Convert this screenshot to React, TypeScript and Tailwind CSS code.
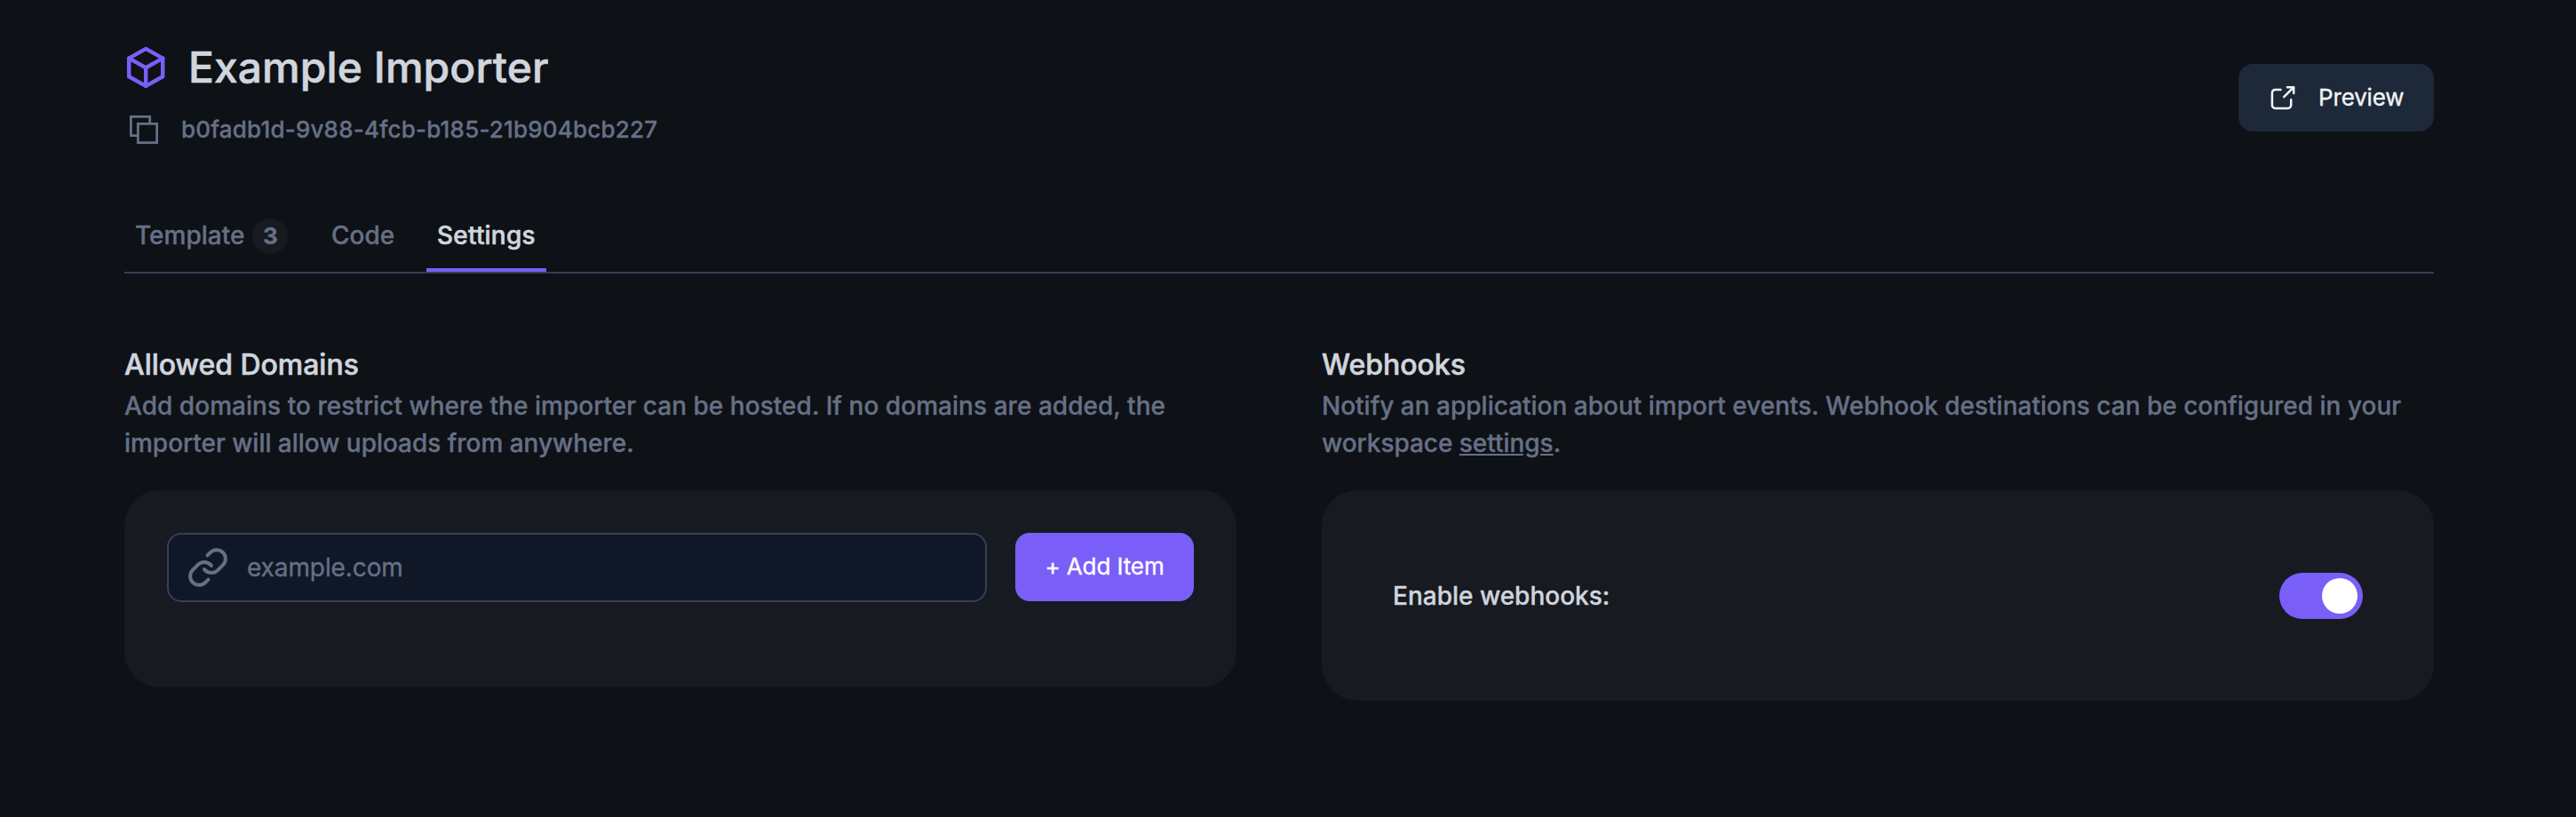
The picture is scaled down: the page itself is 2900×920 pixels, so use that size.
function CubeIcon() {
  return (
    <svg className="size-[52px] text-[#7a5ef8]" viewBox="0 0 52 52" fill="none" stroke="currentColor" strokeWidth="4.5" strokeLinecap="round" strokeLinejoin="round">
      <path d="M24.2 4.9 43.2 15.6V36.2L24.2 46.9 5.2 36.2V15.6z" />
      <path d="M5.2 15.6 24.2 26.2 43.2 15.6M24.2 26.2V46.9" />
    </svg>
  );
}

function CopyIcon() {
  return (
    <svg className="h-8 w-8" viewBox="0 0 32 32" fill="none" stroke="currentColor" strokeWidth="2.8">
      <path d="M8 22.67H1.33V1.33H22.67V8" />
      <path d="M9.33 9.33h21.34v21.34H9.33z" />
    </svg>
  );
}

function LinkIcon() {
  return (
    <svg className="size-12 shrink-0" viewBox="0 0 24 24" fill="none" stroke="currentColor" strokeWidth="2" strokeLinecap="round" strokeLinejoin="round">
      <path d="M10 13a5 5 0 0 0 7.54.54l3-3a5 5 0 0 0-7.07-7.07l-1.72 1.71" />
      <path d="M14 11a5 5 0 0 0-7.54-.54l-3 3a5 5 0 0 0 7.07 7.07l1.71-1.71" />
    </svg>
  );
}

function ExternalIcon() {
  return (
    <svg className="h-7 w-7" viewBox="0 0 28 28" fill="none" stroke="currentColor" strokeWidth="2.5" strokeLinecap="round" strokeLinejoin="round">
      <path d="M11.5 4.9H5.4A3.5 3.5 0 0 0 1.9 8.4V22.4A3.5 3.5 0 0 0 5.4 25.9H19.7A3.5 3.5 0 0 0 23.2 22.4V16.3" />
      <path d="M19 2.2H26.2V9M26.2 2.2 15.2 13.2" />
    </svg>
  );
}

export default function App() {
  return (
    <div className="h-[920px] w-full bg-[#0e1116] pr-[160px] pl-[140px] font-['Inter',sans-serif] text-[28px] font-medium text-[#667085] [-webkit-text-stroke:0.35px]">
      <header className="flex h-[220px] justify-between">
        <div className="pt-[50px]">
          <div className="flex h-[52px] items-center gap-5">
            <CubeIcon />
            <h1 className="text-[48px] leading-[50px] tracking-[0.06px] text-[#d0d5dd] [-webkit-text-stroke:0.6px]">Example Importer</h1>
          </div>
          <div className="mt-7 flex h-8 items-center gap-[26px] pl-[6px]">
            <CopyIcon />
            <span className="text-[26px] leading-8 tracking-[0.19px]">b0fadb1d-9v88-4fcb-b185-21b904bcb227</span>
          </div>
        </div>
        <button className="mt-[72px] flex h-[76px] w-[220px] items-center gap-[26px] rounded-2xl bg-[#1d2939] pl-9 text-[26px] font-normal tracking-[-0.15px] text-[#f2f4f7]">
          <ExternalIcon />
          <span className="pb-[2px]">Preview</span>
        </button>
      </header>
      <nav className="flex h-[88px] border-b-2 border-[#344054] leading-[34px]">
        <div className="flex w-[220px] pt-7 pl-3">
          Template
          <span className="-mt-[2px] ml-[9px] flex size-10 items-center justify-center rounded-full bg-[#171a21] text-[26px] font-bold">3</span>
        </div>
        <div className="w-[120px] pt-7 pl-[13px]">Code</div>
        <div className="w-[135px] border-b-4 border-[#7a5ef8] pt-7 pl-3 tracking-[0.2px] text-[#d0d5dd] [-webkit-text-stroke:0.6px]">Settings</div>
      </nav>
      <main className="grid grid-cols-2 gap-24 pt-[82px]">
        <section>
          <h2 className="text-[32px] leading-[42px] tracking-[-0.03px] text-[#d0d5dd] [-webkit-text-stroke:0.6px]">Allowed Domains</h2>
          <p className="h-[120px] pt-1 leading-[42px]">
            <span className="tracking-[0.04px]">Add domains to restrict where the importer can be hosted. If no domains are added, the</span>
            <br />
            <span className="tracking-[-0.03px]">importer will allow uploads from anywhere.</span>
          </p>
          <div className="flex h-[222px] items-start gap-8 rounded-[40px] bg-[#171a21] p-12">
            <label className="flex h-[78px] flex-1 items-center gap-5 rounded-2xl border-2 border-[#344054] bg-[#101828] pl-5">
              <LinkIcon />
              <input className="w-full bg-transparent font-normal tracking-[-0.1px] outline-none placeholder:text-[#667085]" placeholder="example.com" />
            </label>
            <button className="h-[77px] w-[201px] rounded-2xl bg-[#7a5ef8] pb-[3px] text-[26px] font-normal tracking-[-0.1px] text-white">+ Add Item</button>
          </div>
        </section>
        <section>
          <h2 className="text-[32px] leading-[42px] tracking-[-0.03px] text-[#d0d5dd] [-webkit-text-stroke:0.6px]">Webhooks</h2>
          <p className="h-[120px] pt-1 leading-[42px]">
            Notify an application about import events. Webhook destinations can be configured in your
            <br />
            <span className="tracking-[-0.04px]">
              workspace <a className="underline">settings</a>.
            </span>
          </p>
          <div className="flex h-[237px] items-center justify-between rounded-[40px] bg-[#171a21] px-20">
            <span className="text-[#d0d5dd]">Enable webhooks:</span>
            <button className="flex h-[52px] w-[94px] items-center justify-end rounded-full bg-[#7a5ef8] p-[6px]" aria-label="Enable webhooks">
              <span className="size-10 rounded-full bg-white" />
            </button>
          </div>
        </section>
      </main>
    </div>
  );
}
